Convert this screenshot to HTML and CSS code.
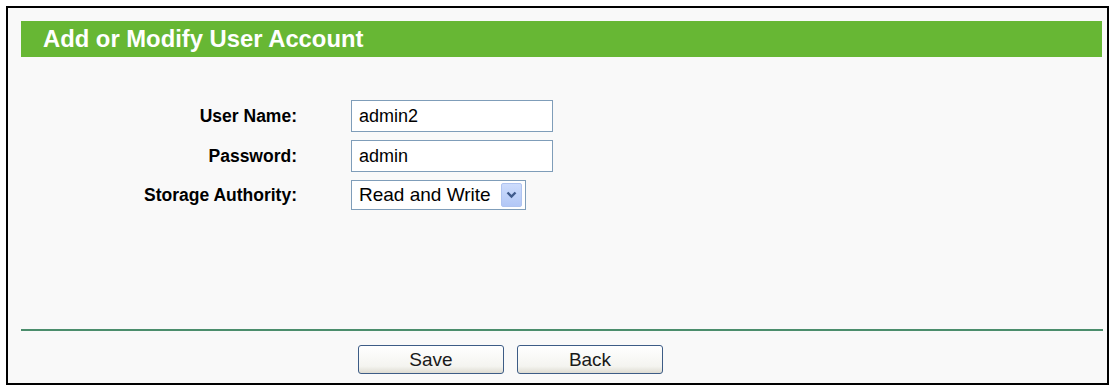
FILE: index.html
```html
<!DOCTYPE html>
<html lang="en">
  <head>
    <meta charset="UTF-8" />
    <title>Add or Modify User Account</title>
    <link rel="stylesheet" href="styles.css">
  </head>
  <body>
    <div class="frame">
      <div class="title">Add or Modify User Account</div>
      <div class="form">
        <label class="label" for="userName">User Name:</label>
        <input class="field" type="text" id="userName" value="admin2" />
        <label class="label" for="password">Password:</label>
        <input class="field" type="text" id="password" value="admin" />
        <div class="label">Storage Authority:</div>
        <div class="select">
          <span class="select-text">Read and Write</span>
          <span class="select-arrow">
            <svg width="11" height="8" viewBox="0 0 11 8">
              <path d="M1.5 1.5 L5.5 5.5 L9.5 1.5" fill="none" stroke="#3f5a8c" stroke-width="2.4" />
            </svg>
          </span>
        </div>
      </div>
      <div class="divider"></div>
      <div class="buttons">
        <button class="btn">Save</button>
        <button class="btn">Back</button>
      </div>
    </div>
  </body>
</html>
```

FILE: styles.css
```css
body {
  margin: 0;
  padding: 6px 0 0 6px;
  background: #fff;
  font-family: "Liberation Sans", Arial, sans-serif;
}
.frame {
  width: 1103px;
  box-sizing: border-box;
  border: 2px solid #000;
  background: #f9f9f9;
  padding-bottom: 9px;
}
.title {
  margin: 13px 5px 0 13px;
  height: 36px;
  line-height: 36px;
  padding-left: 22px;
  background: #67b734;
  color: #fff;
  font-size: 23.8px;
  font-weight: bold;
}
.form {
  display: grid;
  grid-template-columns: 289px 202px;
  column-gap: 54px;
  row-gap: 8px;
  align-items: center;
  margin-top: 43px;
}
.label {
  text-align: right;
  font-size: 17.5px;
  font-weight: bold;
  color: #000;
}
.field {
  width: 202px;
  height: 32px;
  box-sizing: border-box;
  margin: 0;
  border: 1px solid #7f9db9;
  padding: 0 7px;
  background: #fff;
  font-family: "Liberation Sans", Arial, sans-serif;
  font-size: 18px;
  color: #000;
}
.select {
  display: flex;
  align-items: center;
  justify-content: space-between;
  width: 175px;
  height: 30px;
  box-sizing: border-box;
  border: 1px solid #7f9db9;
  background: #fff;
  padding: 0 3px 0 7px;
}
.select-text {
  font-size: 19px;
  color: #000;
}
.select-arrow {
  display: flex;
  align-items: center;
  justify-content: center;
  width: 21px;
  height: 24px;
  box-sizing: border-box;
  border: 1px solid #b0c4f0;
  border-radius: 2px;
  background: linear-gradient(#cddcfc, #b2c7f6);
}
.divider {
  margin: 119px 4px 0 13px;
  height: 2px;
  background: #4b8d6c;
}
.buttons {
  display: flex;
  gap: 13px;
  margin-top: 14px;
  padding-left: 350px;
}
.btn {
  width: 146px;
  height: 29px;
  box-sizing: border-box;
  border: 1px solid #3d5c86;
  border-radius: 3px;
  background: linear-gradient(#ffffff, #f4f4f0 75%, #dedcd2);
  font-family: "Liberation Sans", Arial, sans-serif;
  font-size: 19px;
  color: #1a1a1a;
  padding: 0;
}
```
